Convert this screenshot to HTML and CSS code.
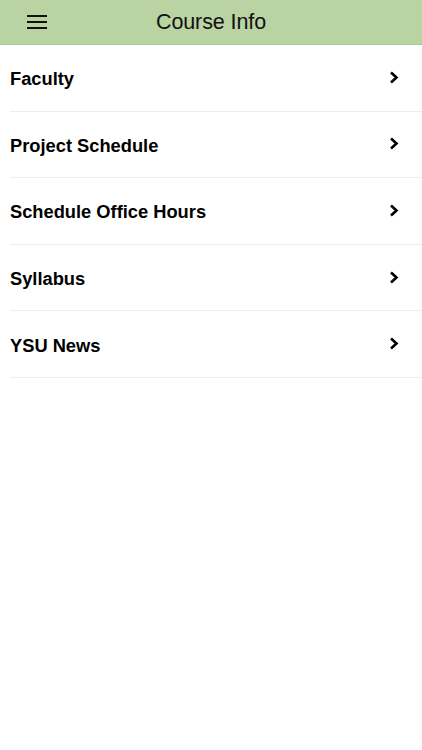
FILE: index.html
```html
<!DOCTYPE html>
<html lang="en">
<head>
<meta charset="utf-8">
<title>Course Info</title>
<link rel="stylesheet" href="styles.css">
</head>
<body>
<header class="topbar">
  <button class="menu-btn" aria-label="Menu">
    <svg width="20" height="14" viewBox="0 0 20 14"><path d="M0 1H20M0 7H20M0 13H20" stroke="#111" stroke-width="2"/></svg>
  </button>
  <h1 class="title">Course Info</h1>
</header>
<ul class="list">
  <li class="item"><span class="label">Faculty</span><svg class="chev" width="10" height="13" viewBox="0 0 10 13"><path d="M2 1.5L7.5 6.5L2 11.5" fill="none" stroke="#000" stroke-width="2.6"/></svg></li>
  <li class="item"><span class="label">Project Schedule</span><svg class="chev" width="10" height="13" viewBox="0 0 10 13"><path d="M2 1.5L7.5 6.5L2 11.5" fill="none" stroke="#000" stroke-width="2.6"/></svg></li>
  <li class="item"><span class="label">Schedule Office Hours</span><svg class="chev" width="10" height="13" viewBox="0 0 10 13"><path d="M2 1.5L7.5 6.5L2 11.5" fill="none" stroke="#000" stroke-width="2.6"/></svg></li>
  <li class="item"><span class="label">Syllabus</span><svg class="chev" width="10" height="13" viewBox="0 0 10 13"><path d="M2 1.5L7.5 6.5L2 11.5" fill="none" stroke="#000" stroke-width="2.6"/></svg></li>
  <li class="item"><span class="label">YSU News</span><svg class="chev" width="10" height="13" viewBox="0 0 10 13"><path d="M2 1.5L7.5 6.5L2 11.5" fill="none" stroke="#000" stroke-width="2.6"/></svg></li>
</ul>
</body>
</html>
```
FILE: styles.css
```css
* { box-sizing: border-box; }
html, body { margin: 0; padding: 0; background: #fff; }
body { font-family: "Liberation Sans", Arial, sans-serif; color: #000; width: 422px; }
.topbar {
  height: 45px;
  background: #bad3a3;
  border-bottom: 1px solid #aec796;
  display: flex;
  align-items: center;
  justify-content: center;
  position: relative;
}
.menu-btn {
  position: absolute;
  left: 27px;
  top: 15px;
  padding: 0;
  border: 0;
  background: none;
  display: flex;
}
.title {
  margin: 0;
  font-size: 21.5px;
  font-weight: normal;
  color: #111;
  letter-spacing: -0.1px;
}
.list { list-style: none; margin: 0; padding: 0 0 0 10px; }
.item {
  height: 66.6px;
  border-bottom: 1px solid #eeeeee;
  display: flex;
  align-items: center;
  justify-content: space-between;
  padding-right: 23px;
}
.label { font-size: 18.3px; font-weight: bold; padding-top: 3px; }
.chev { display: block; margin-top: -1px; }
```
